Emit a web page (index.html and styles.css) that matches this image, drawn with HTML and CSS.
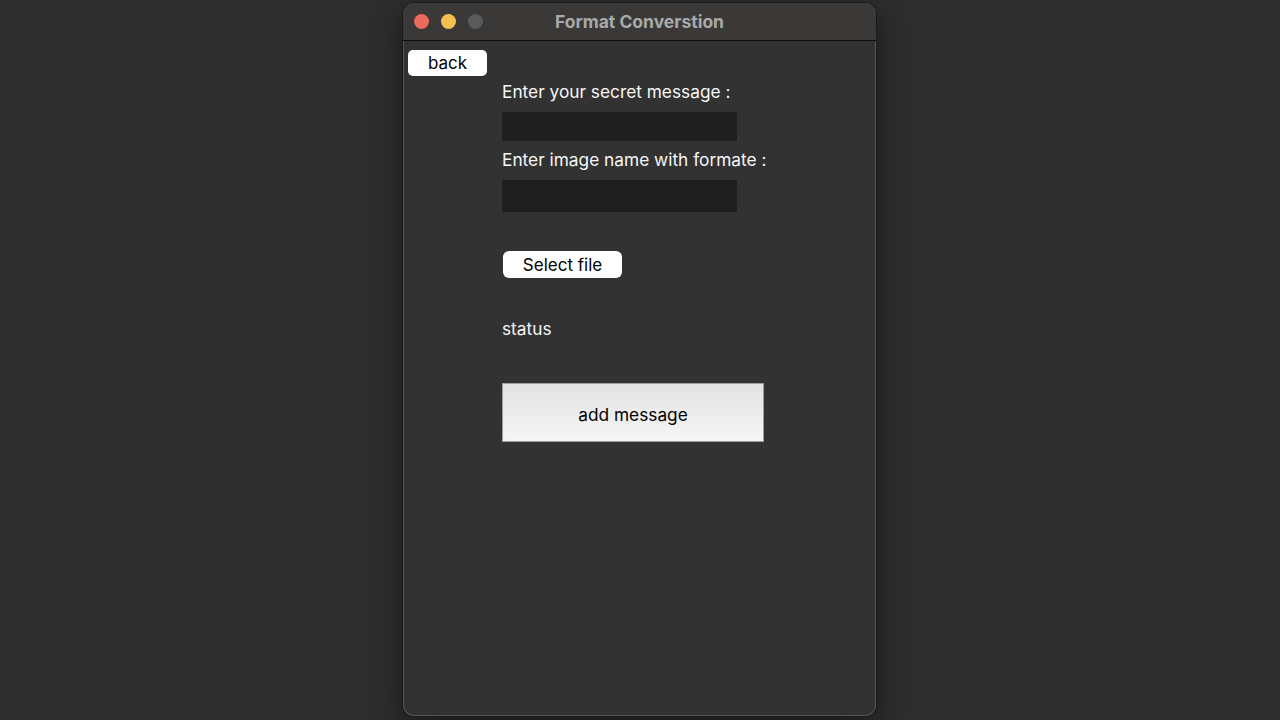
FILE: index.html
```html
<!DOCTYPE html>
<html>
<head>
<meta charset="utf-8">
<link rel="stylesheet" href="styles.css">
</head>
<body>
<div class="window">
  <div class="titlebar">
    <div class="lights">
      <span class="light red"></span>
      <span class="light yellow"></span>
      <span class="light gray"></span>
    </div>
    <div class="title">Format Converstion</div>
  </div>
  <div class="content">
    <button class="pill back">back</button>
    <div class="form">
      <div class="label">Enter your secret message :</div>
      <div class="input in1"></div>
      <div class="label">Enter image name with formate :</div>
      <div class="input in2"></div>
      <button class="pill select">Select file</button>
      <div class="label status">status</div>
      <button class="add">add message</button>
    </div>
  </div>
</div>
</body>
</html>
```
FILE: styles.css
```css
html, body {
  margin: 0;
  padding: 0;
  background: #2d2d2d;
  width: 1280px;
  height: 720px;
  overflow: hidden;
  font-family: Inter, "Liberation Sans", sans-serif;
}
.window {
  width: 473px;
  height: 713px;
  margin: 3px 0 0 403px;
  background: #323232;
  border-radius: 11px;
  box-shadow: 0 0 0 1px #1a1a1a, inset 0 0 0 1px #555, 0 8px 30px rgba(0,0,0,0.45);
  overflow: hidden;
  display: flex;
  flex-direction: column;
}
.titlebar {
  height: 37px;
  background: #3a3938;
  border-bottom: 1px solid #0f0f0f;
  position: relative;
  display: flex;
  align-items: center;
  justify-content: center;
  flex-shrink: 0;
}
.lights {
  position: absolute;
  left: 11px;
  top: 11px;
  display: flex;
  gap: 12px;
}
.light {
  width: 15px;
  height: 15px;
  border-radius: 50%;
  display: block;
}
.red { background: #ec6a5e; }
.yellow { background: #f4bf4f; }
.gray { background: #5a5a5a; }
.title {
  color: #a9a9a9;
  font-weight: 700;
  font-size: 17.5px;
  margin-top: -1px;
}
.content {
  padding: 9px 0 0 5px;
  display: flex;
  flex-direction: column;
  align-items: flex-start;
}
.pill {
  background: #ffffff;
  border: none;
  border-radius: 5px;
  color: #000;
  font-family: Inter, "Liberation Sans", sans-serif;
  font-size: 17px;
  padding: 0;
  display: flex;
  align-items: center;
  justify-content: center;
}
.back {
  width: 79px;
  height: 26px;
}
.form {
  margin-left: 94px;
  margin-top: 4px;
  display: flex;
  flex-direction: column;
  align-items: flex-start;
}
.label {
  color: #f6f6f6;
  font-size: 17.3px;
  line-height: 22px;
  height: 21px;
  padding-top: 1px;
}
.input {
  width: 235px;
  background: #1f1f1f;
  margin: 10px 0 7px;
}
.in1 { height: 29px; }
.in2 { height: 32px; margin-bottom: 0; }
.select {
  width: 119px;
  height: 27px;
  margin-top: 39px;
  margin-left: 1px;
  border-radius: 6px;
}
.status {
  margin-top: 39px;
}
.add {
  margin-top: 44px;
  width: 262px;
  height: 59px;
  border: 1px solid #9d9d9d;
  background: linear-gradient(#e3e3e3, #f5f5f5);
  color: #000;
  font-family: Inter, "Liberation Sans", sans-serif;
  font-size: 17.3px;
  padding: 0;
  padding-top: 3px;
}
```
